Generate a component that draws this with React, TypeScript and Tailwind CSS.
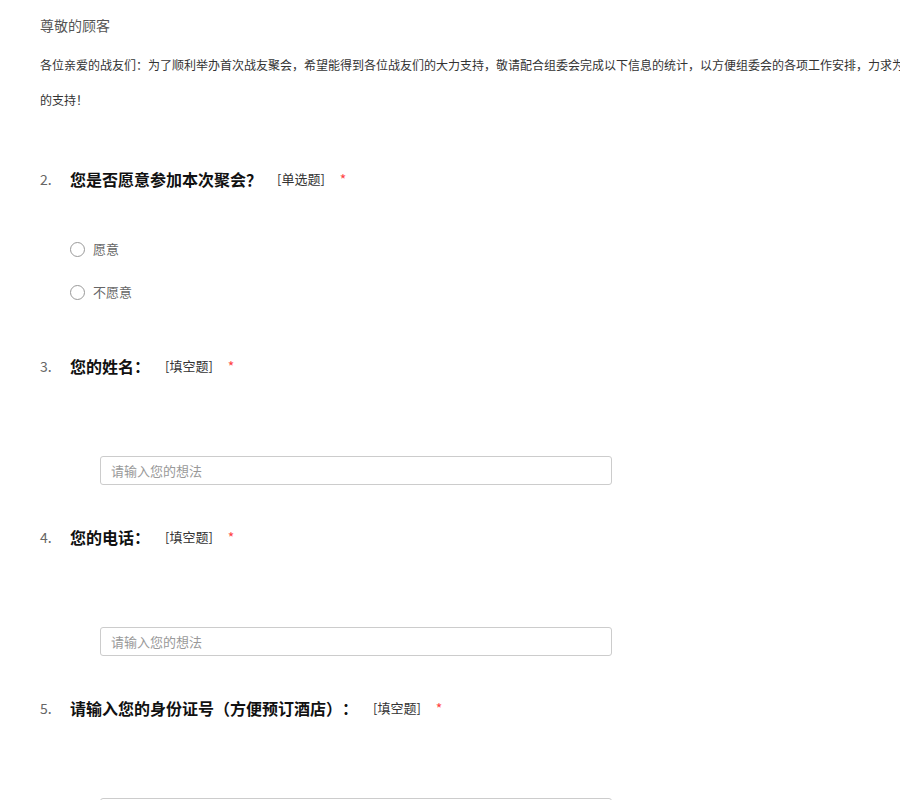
import React from "react";

const font = { fontFamily: '"Noto Sans CJK SC", "Noto Sans", sans-serif' };

function QTitle({ n, title, tag }: { n: string; title: string; tag: string }) {
  return (
    <div className="flex items-center h-[24px]">
      <span className="w-[30px] text-[14px] text-[#666]">{n}</span>
      <span className="text-[16px] font-bold text-[#111]">{title}</span>
      <span className="ml-[15px] text-[13px] text-[#333]">{tag}</span>
      <span className="ml-[15px] text-[14px] text-[#f44]">*</span>
    </div>
  );
}

function Radio({ label, className }: { label: string; className: string }) {
  return (
    <div className={"flex items-center h-[20px] pl-[30px] " + className}>
      <span className="w-[15px] h-[15px] rounded-full border border-[#999] bg-white box-border" />
      <span className="ml-[8px] text-[13px] text-[#666]">{label}</span>
    </div>
  );
}

function TextInput({ className }: { className: string }) {
  return (
    <div className={"pl-[60px] " + className}>
      <input
        placeholder="请输入您的想法"
        className="w-[512px] h-[29px] border border-[#ccc] rounded-[3px] px-[10px] text-[13px] text-[#333] placeholder:text-[#999] outline-none box-border"
        style={font}
      />
    </div>
  );
}

export default function App() {
  return (
    <div className="w-[900px] h-[800px] overflow-hidden bg-white [text-spacing-trim:space-all]" style={font}>
      <div className="pl-[40px] w-[1100px]">
        <div className="pt-[15px] h-[35px] leading-[20px] text-[14px] text-[#555]">尊敬的顾客</div>
        <div className="mt-[12px] text-[12px] text-[#333] leading-[35px]">
          <div className="whitespace-nowrap">
            各位亲爱的战友们：为了顺利举办首次战友聚会，希望能得到各位战友们的大力支持，敬请配合组委会完成以下信息的统计，以方便组委会的各项工作安排，力求为大家做好服务，感谢大家
          </div>
          <div>的支持！</div>
        </div>

        <div className="mt-[50px]">
          <QTitle n="2." title="您是否愿意参加本次聚会？" tag="[单选题]" />
          <Radio label="愿意" className="mt-[48px]" />
          <Radio label="不愿意" className="mt-[23px]" />
        </div>

        <div className="mt-[52px]">
          <QTitle n="3." title="您的姓名：" tag="[填空题]" />
          <TextInput className="mt-[78px]" />
        </div>

        <div className="mt-[40px]">
          <QTitle n="4." title="您的电话：" tag="[填空题]" />
          <TextInput className="mt-[78px]" />
        </div>

        <div className="mt-[40px]">
          <QTitle n="5." title="请输入您的身份证号（方便预订酒店）：" tag="[填空题]" />
          <TextInput className="mt-[78px]" />
        </div>
      </div>
    </div>
  );
}
